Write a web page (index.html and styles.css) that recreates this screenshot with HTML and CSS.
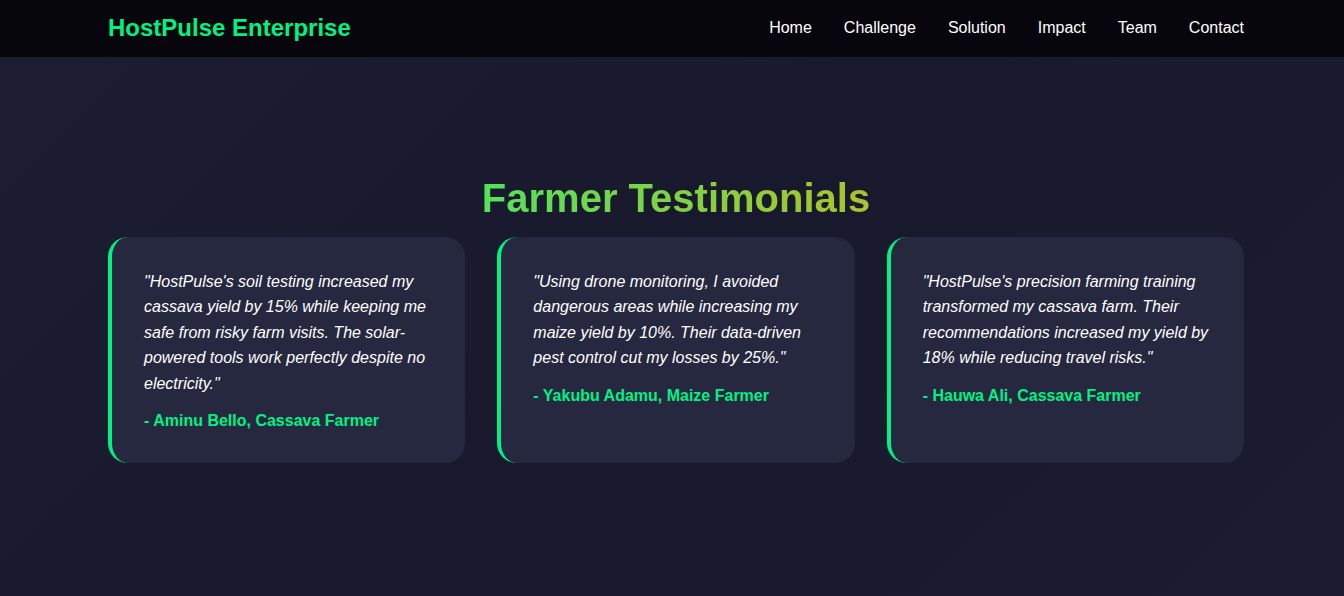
FILE: index.html
```html
<!DOCTYPE html>
<html lang="en">
<head>
<meta charset="utf-8">
<title>HostPulse Enterprise</title>
<link rel="stylesheet" href="styles.css">
</head>
<body>
<header class="header">
  <div class="container nav">
    <div class="logo">HostPulse Enterprise</div>
    <nav class="links">
      <a href="#">Home</a>
      <a href="#">Challenge</a>
      <a href="#">Solution</a>
      <a href="#">Impact</a>
      <a href="#">Team</a>
      <a href="#">Contact</a>
    </nav>
  </div>
</header>
<section class="testimonials">
  <div class="container">
    <h2 class="title">Farmer Testimonials</h2>
    <div class="grid">
      <div class="card">
        <p class="quote">"HostPulse's soil testing increased my cassava yield by 15% while keeping me safe from risky farm visits. The solar-powered tools work perfectly despite no electricity."</p>
        <p class="author">- Aminu Bello, Cassava Farmer</p>
      </div>
      <div class="card">
        <p class="quote">"Using drone monitoring, I avoided dangerous areas while increasing my maize yield by 10%. Their data-driven pest control cut my losses by 25%."</p>
        <p class="author">- Yakubu Adamu, Maize Farmer</p>
      </div>
      <div class="card">
        <p class="quote">"HostPulse's precision farming training transformed my cassava farm. Their recommendations increased my yield by 18% while reducing travel risks."</p>
        <p class="author">- Hauwa Ali, Cassava Farmer</p>
      </div>
    </div>
  </div>
</section>
</body>
</html>
```
FILE: styles.css
```css
* { box-sizing: border-box; }
html, body { margin: 0; padding: 0; }
body {
  font-family: "Liberation Sans", Arial, sans-serif;
  background: linear-gradient(135deg, #1c1d33 0%, #18192c 50%, #1b1c30 100%);
  color: #ffffff;
  min-height: 596px;
}
.container {
  width: 1136px;
  margin-left: 108px;
}
.header {
  background: #06060c;
  height: 57px;
}
.nav {
  height: 57px;
  padding-bottom: 2px;
  display: flex;
  align-items: center;
  justify-content: space-between;
}
.logo {
  color: #00f283;
  font-size: 24px;
  font-weight: bold;
}
.links {
  display: flex;
  gap: 32px;
}
.links a {
  color: #ffffff;
  text-decoration: none;
  font-size: 16px;
}
.testimonials {
  padding: 118px 0 80px;
}
.title {
  margin: 0 0 16px;
  text-align: center;
  font-size: 40px;
  font-weight: bold;
  line-height: 46px;
  background: linear-gradient(90deg, #00ff88, #ffa500);
  -webkit-background-clip: text;
  background-clip: text;
  color: transparent;
}
.grid {
  display: grid;
  grid-template-columns: repeat(3, 1fr);
  gap: 32px;
}
.card {
  background: #262840;
  border-left: 4px solid #00f283;
  border-radius: 20px;
  padding: 32px;
  min-height: 226px;
}
.quote {
  margin: 0 0 16px;
  font-style: italic;
  font-size: 16px;
  line-height: 25.4px;
  color: #ffffff;
}
.author {
  margin: 0;
  color: #00f283;
  font-weight: bold;
  font-size: 16px;
}
```
